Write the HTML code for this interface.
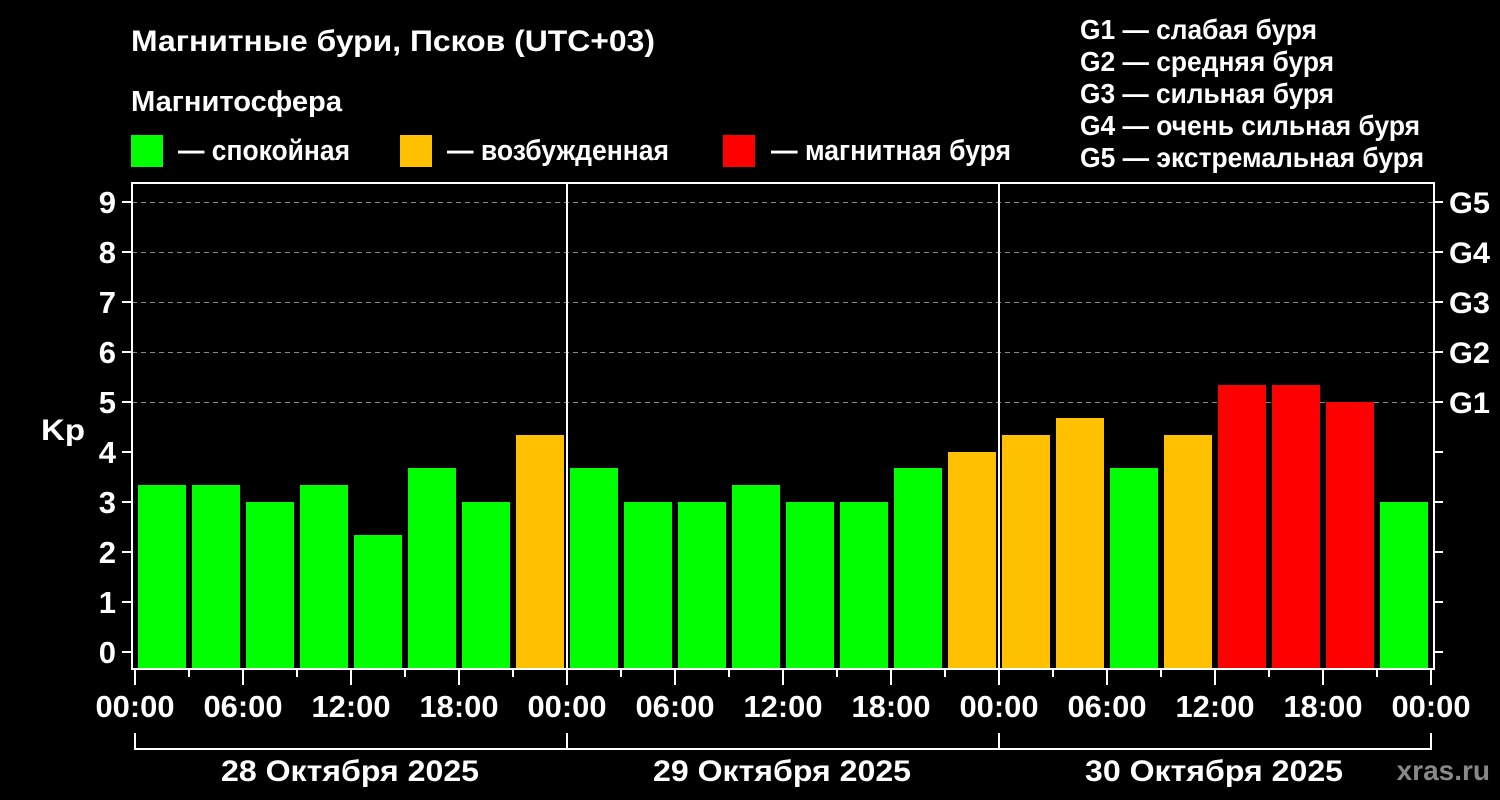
<!DOCTYPE html>
<html><head><meta charset="utf-8"><style>
html,body{margin:0;padding:0;background:#000;}
svg{display:block}
text{font-family:"Liberation Sans",sans-serif;font-weight:bold;fill:#fff}
</style></head><body>
<svg width="1500" height="800" xmlns="http://www.w3.org/2000/svg">
<rect width="1500" height="800" fill="#000"/>
<text x="131" y="51" font-size="30" textLength="524" lengthAdjust="spacingAndGlyphs">Магнитные бури, Псков (UTC+03)</text>
<text x="131" y="111" font-size="29" textLength="211" lengthAdjust="spacingAndGlyphs">Магнитосфера</text>
<rect x="131" y="135" width="32" height="32" fill="#00ff00"/>
<text x="178" y="160" font-size="29" textLength="172" lengthAdjust="spacingAndGlyphs">— спокойная</text>
<rect x="400" y="135" width="32" height="32" fill="#ffc000"/>
<text x="447" y="160" font-size="29" textLength="222" lengthAdjust="spacingAndGlyphs">— возбужденная</text>
<rect x="723" y="135" width="32" height="32" fill="#ff0000"/>
<text x="771" y="160" font-size="29" textLength="240" lengthAdjust="spacingAndGlyphs">— магнитная буря</text>
<g font-size="28">
<text x="1080" y="39" textLength="237" lengthAdjust="spacingAndGlyphs">G1 — слабая буря</text>
<text x="1080" y="71" textLength="254" lengthAdjust="spacingAndGlyphs">G2 — средняя буря</text>
<text x="1080" y="103" textLength="254" lengthAdjust="spacingAndGlyphs">G3 — сильная буря</text>
<text x="1080" y="135" textLength="340" lengthAdjust="spacingAndGlyphs">G4 — очень сильная буря</text>
<text x="1080" y="167" textLength="344" lengthAdjust="spacingAndGlyphs">G5 — экстремальная буря</text>
</g>
<g stroke="#888" stroke-width="1" stroke-dasharray="5,4">
<line x1="132" y1="202.5" x2="1433" y2="202.5"/>
<line x1="132" y1="252.5" x2="1433" y2="252.5"/>
<line x1="132" y1="302.5" x2="1433" y2="302.5"/>
<line x1="132" y1="352.5" x2="1433" y2="352.5"/>
<line x1="132" y1="402.5" x2="1433" y2="402.5"/>
</g>
<g>
<rect x="138" y="485" width="48" height="183" fill="#00ff00"/>
<rect x="192" y="485" width="48" height="183" fill="#00ff00"/>
<rect x="246" y="502" width="48" height="166" fill="#00ff00"/>
<rect x="300" y="485" width="48" height="183" fill="#00ff00"/>
<rect x="354" y="535" width="48" height="133" fill="#00ff00"/>
<rect x="408" y="468" width="48" height="200" fill="#00ff00"/>
<rect x="462" y="502" width="48" height="166" fill="#00ff00"/>
<rect x="516" y="435" width="48" height="233" fill="#ffc000"/>
<rect x="570" y="468" width="48" height="200" fill="#00ff00"/>
<rect x="624" y="502" width="48" height="166" fill="#00ff00"/>
<rect x="678" y="502" width="48" height="166" fill="#00ff00"/>
<rect x="732" y="485" width="48" height="183" fill="#00ff00"/>
<rect x="786" y="502" width="48" height="166" fill="#00ff00"/>
<rect x="840" y="502" width="48" height="166" fill="#00ff00"/>
<rect x="894" y="468" width="48" height="200" fill="#00ff00"/>
<rect x="948" y="452" width="48" height="216" fill="#ffc000"/>
<rect x="1002" y="435" width="48" height="233" fill="#ffc000"/>
<rect x="1056" y="418" width="48" height="250" fill="#ffc000"/>
<rect x="1110" y="468" width="48" height="200" fill="#00ff00"/>
<rect x="1164" y="435" width="48" height="233" fill="#ffc000"/>
<rect x="1218" y="385" width="48" height="283" fill="#ff0000"/>
<rect x="1272" y="385" width="48" height="283" fill="#ff0000"/>
<rect x="1326" y="402" width="48" height="266" fill="#ff0000"/>
<rect x="1380" y="502" width="48" height="166" fill="#00ff00"/>
</g>
<g stroke="#fff" stroke-width="2" fill="none">
<rect x="132" y="183" width="1302" height="486"/>
<line x1="567" y1="183" x2="567" y2="669"/>
<line x1="999" y1="183" x2="999" y2="669"/>
</g>
<g stroke="#fff" stroke-width="2">
<line x1="122" y1="202" x2="132" y2="202"/><line x1="122" y1="252" x2="132" y2="252"/><line x1="122" y1="302" x2="132" y2="302"/><line x1="122" y1="352" x2="132" y2="352"/><line x1="122" y1="402" x2="132" y2="402"/><line x1="122" y1="452" x2="132" y2="452"/><line x1="122" y1="502" x2="132" y2="502"/><line x1="122" y1="552" x2="132" y2="552"/><line x1="122" y1="602" x2="132" y2="602"/><line x1="122" y1="652" x2="132" y2="652"/>
<line x1="1434" y1="202" x2="1443" y2="202"/><line x1="1434" y1="252" x2="1443" y2="252"/><line x1="1434" y1="302" x2="1443" y2="302"/><line x1="1434" y1="352" x2="1443" y2="352"/><line x1="1434" y1="402" x2="1443" y2="402"/><line x1="1434" y1="452" x2="1443" y2="452"/><line x1="1434" y1="502" x2="1443" y2="502"/><line x1="1434" y1="552" x2="1443" y2="552"/><line x1="1434" y1="602" x2="1443" y2="602"/><line x1="1434" y1="652" x2="1443" y2="652"/>
</g>
<g font-size="31" text-anchor="end">
<text x="116" y="213">9</text><text x="116" y="263">8</text><text x="116" y="313">7</text><text x="116" y="363">6</text><text x="116" y="413">5</text><text x="116" y="463">4</text><text x="116" y="513">3</text><text x="116" y="563">2</text><text x="116" y="613">1</text><text x="116" y="663">0</text>
</g>
<text x="41" y="440" font-size="30" textLength="44" lengthAdjust="spacingAndGlyphs">Kp</text>
<g font-size="30">
<text x="1449" y="213" textLength="41" lengthAdjust="spacingAndGlyphs">G5</text><text x="1449" y="263" textLength="41" lengthAdjust="spacingAndGlyphs">G4</text><text x="1449" y="313" textLength="41" lengthAdjust="spacingAndGlyphs">G3</text><text x="1449" y="363" textLength="41" lengthAdjust="spacingAndGlyphs">G2</text><text x="1449" y="413" textLength="41" lengthAdjust="spacingAndGlyphs">G1</text>
</g>
<g stroke="#fff" stroke-width="2">
<line x1="135" y1="669" x2="135" y2="685"/><line x1="243" y1="669" x2="243" y2="685"/><line x1="351" y1="669" x2="351" y2="685"/><line x1="459" y1="669" x2="459" y2="685"/><line x1="567" y1="669" x2="567" y2="685"/>
<line x1="675" y1="669" x2="675" y2="685"/><line x1="783" y1="669" x2="783" y2="685"/><line x1="891" y1="669" x2="891" y2="685"/><line x1="999" y1="669" x2="999" y2="685"/>
<line x1="1107" y1="669" x2="1107" y2="685"/><line x1="1215" y1="669" x2="1215" y2="685"/><line x1="1323" y1="669" x2="1323" y2="685"/><line x1="1431" y1="669" x2="1431" y2="685"/>
<line x1="189" y1="669" x2="189" y2="677"/><line x1="297" y1="669" x2="297" y2="677"/><line x1="405" y1="669" x2="405" y2="677"/><line x1="513" y1="669" x2="513" y2="677"/><line x1="621" y1="669" x2="621" y2="677"/><line x1="729" y1="669" x2="729" y2="677"/><line x1="837" y1="669" x2="837" y2="677"/><line x1="945" y1="669" x2="945" y2="677"/><line x1="1053" y1="669" x2="1053" y2="677"/><line x1="1161" y1="669" x2="1161" y2="677"/><line x1="1269" y1="669" x2="1269" y2="677"/><line x1="1377" y1="669" x2="1377" y2="677"/>
</g>
<g font-size="31" text-anchor="middle">
<text x="135" y="717" textLength="79" lengthAdjust="spacingAndGlyphs">00:00</text><text x="243" y="717" textLength="79" lengthAdjust="spacingAndGlyphs">06:00</text><text x="351" y="717" textLength="79" lengthAdjust="spacingAndGlyphs">12:00</text><text x="459" y="717" textLength="79" lengthAdjust="spacingAndGlyphs">18:00</text><text x="567" y="717" textLength="79" lengthAdjust="spacingAndGlyphs">00:00</text><text x="675" y="717" textLength="79" lengthAdjust="spacingAndGlyphs">06:00</text><text x="783" y="717" textLength="79" lengthAdjust="spacingAndGlyphs">12:00</text><text x="891" y="717" textLength="79" lengthAdjust="spacingAndGlyphs">18:00</text><text x="999" y="717" textLength="79" lengthAdjust="spacingAndGlyphs">00:00</text><text x="1107" y="717" textLength="79" lengthAdjust="spacingAndGlyphs">06:00</text><text x="1215" y="717" textLength="79" lengthAdjust="spacingAndGlyphs">12:00</text><text x="1323" y="717" textLength="79" lengthAdjust="spacingAndGlyphs">18:00</text><text x="1431" y="717" textLength="79" lengthAdjust="spacingAndGlyphs">00:00</text>
</g>
<g stroke="#fff" stroke-width="2" fill="none">
<polyline points="135,733 135,749 1431,749 1431,733"/>
<line x1="567" y1="733" x2="567" y2="749"/><line x1="999" y1="733" x2="999" y2="749"/>
</g>
<g font-size="30" text-anchor="middle">
<text x="350" y="781" textLength="258" lengthAdjust="spacingAndGlyphs">28 Октября 2025</text><text x="782" y="781" textLength="258" lengthAdjust="spacingAndGlyphs">29 Октября 2025</text><text x="1214" y="781" textLength="258" lengthAdjust="spacingAndGlyphs">30 Октября 2025</text>
</g>
<text x="1490" y="780" font-size="28" text-anchor="end" style="fill:#888">xras.ru</text>
</svg>
</body></html>
